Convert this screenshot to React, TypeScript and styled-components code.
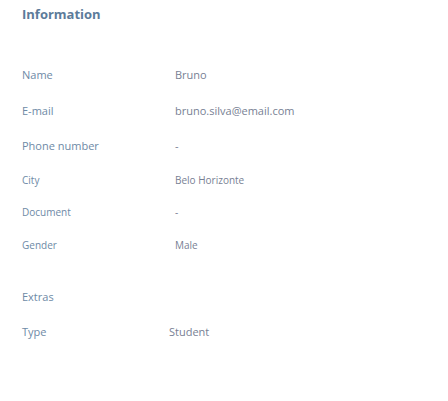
import React from 'react';
import styled, { createGlobalStyle } from 'styled-components';

const GlobalStyle = createGlobalStyle`
    html, body {
        margin: 0;
        padding: 0;
        background: #ffffff;
    }
    body {
        font-family: 'Open Sans', 'Liberation Sans', sans-serif;
    }
`;

const Panel = styled.section`
    width: 448px;
    height: 401px;
    padding: 5px 22px 0;
    box-sizing: border-box;
`;

const Title = styled.h2`
    margin: 0 0 34px;
    font-size: 13px;
    font-weight: 700;
    line-height: 18px;
    color: #5c7b9a;
`;

const List = styled.div<{ $gap?: number }>`
    display: flex;
    flex-direction: column;
    margin-bottom: ${props => props.$gap ?? 0}px;
`;

const Row = styled.div<{ $col?: number; $small?: boolean }>`
    display: grid;
    grid-template-columns: ${props => props.$col ?? 153}px 1fr;
    align-items: center;
    height: ${props => (props.$small ? 32.5 : 35.5)}px;
    font-size: ${props => (props.$small ? 10 : 11)}px;
`;

const Label = styled.span`
    color: #6e8aa6;
`;

const Value = styled.span`
    color: #787f94;
`;

const Heading = styled.div`
    height: 35px;
    display: flex;
    align-items: center;
    font-size: 11px;
    color: #6e8aa6;
`;

type Item = { label: string; value: string; small?: boolean };

const info: Item[] = [
    { label: 'Name', value: 'Bruno' },
    { label: 'E-mail', value: 'bruno.silva@email.com' },
    { label: 'Phone number', value: '-' },
    { label: 'City', value: 'Belo Horizonte', small: true },
    { label: 'Document', value: '-', small: true },
    { label: 'Gender', value: 'Male', small: true },
];

const App = () => (
    <Panel>
        <GlobalStyle />
        <Title>Information</Title>
        <List $gap={18}>
            {info.map(item => (
                <Row key={item.label} $small={item.small}>
                    <Label>{item.label}</Label>
                    <Value>{item.value}</Value>
                </Row>
            ))}
        </List>
        <Heading>Extras</Heading>
        <List>
            <Row $col={147}>
                <Label>Type</Label>
                <Value>Student</Value>
            </Row>
        </List>
    </Panel>
);

export default App;
